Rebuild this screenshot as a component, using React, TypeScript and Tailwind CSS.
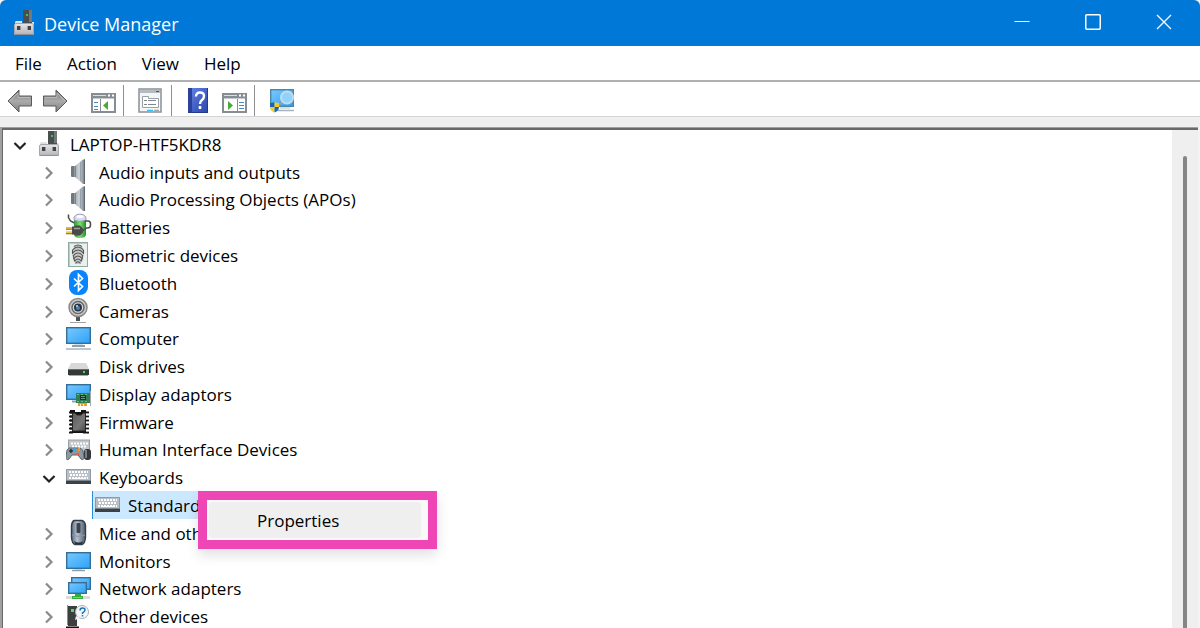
import type { ReactNode } from "react";

function Glyph({ children }: { children: ReactNode }) {
  return (
    <svg className="block h-7 w-[26px] shrink-0" viewBox="0 0 26 28" aria-hidden="true">
      {children}
    </svg>
  );
}

function Gradients() {
  return (
    <svg className="absolute h-0 w-0" aria-hidden="true">
      <defs>
        <linearGradient id="screen" x1="0" y1="0" x2="1" y2="1">
          <stop offset="0" stopColor="#7cc8fb" />
          <stop offset="0.5" stopColor="#52b5fb" />
          <stop offset="1" stopColor="#2ba3f8" />
        </linearGradient>
        <linearGradient id="metal" x1="0" y1="0" x2="0" y2="1">
          <stop offset="0" stopColor="#e6e6e8" />
          <stop offset="1" stopColor="#b4b5b9" />
        </linearGradient>
        <linearGradient id="cone" x1="0" y1="0" x2="1" y2="0">
          <stop offset="0" stopColor="#a4abb2" />
          <stop offset="0.4" stopColor="#cdd2d7" />
          <stop offset="0.75" stopColor="#98a1aa" />
          <stop offset="1" stopColor="#6a747e" />
        </linearGradient>
        <linearGradient id="arrow" x1="0" y1="0" x2="0" y2="1">
          <stop offset="0" stopColor="#777" />
          <stop offset="0.5" stopColor="#ababab" />
          <stop offset="1" stopColor="#7e7e7e" />
        </linearGradient>
        <linearGradient id="mouse" x1="0" y1="0" x2="1" y2="0">
          <stop offset="0" stopColor="#596b80" />
          <stop offset="0.4" stopColor="#b4c2d2" />
          <stop offset="1" stopColor="#4c5a6b" />
        </linearGradient>
        <linearGradient id="chip" x1="0" y1="0" x2="1" y2="1">
          <stop offset="0" stopColor="#5b5b5b" />
          <stop offset="0.6" stopColor="#777" />
          <stop offset="1" stopColor="#4a4a4a" />
        </linearGradient>
        <linearGradient id="book" x1="0" y1="0" x2="1" y2="1">
          <stop offset="0" stopColor="#6688e2" />
          <stop offset="0.5" stopColor="#4563c8" />
          <stop offset="1" stopColor="#2c48ac" />
        </linearGradient>
        <linearGradient id="battery" x1="0" y1="0" x2="1" y2="0">
          <stop offset="0" stopColor="#249a2b" />
          <stop offset="0.5" stopColor="#7be070" />
          <stop offset="1" stopColor="#1c8e24" />
        </linearGradient>
      </defs>
    </svg>
  );
}

function DeviceIcon() {
  return (
    <Glyph>
      <rect x="11" y="1" width="9" height="13" fill="#4b4e51" />
      <rect x="17" y="1" width="3" height="12" fill="#75787b" />
      <rect x="14" y="5" width="2" height="2" fill="#35c94c" />
      <path d="M4 12h6v2h10v-1h2v11H3V13z" fill="url(#metal)" />
      <path d="M2.500 15.500v10h19v-10l-1.500-1H4z" fill="url(#metal)" stroke="#a6a7ab" strokeWidth="1" />
      <path d="M3 25.500h18" stroke="#8f9094" />
      <rect x="5" y="17" width="4" height="4" fill="#444" />
      <rect x="15" y="17" width="4" height="4" fill="#444" />
      <path d="M8.500 17v4M15.500 17v4" stroke="#999" />
    </Glyph>
  );
}

function SpeakerIcon() {
  return (
    <Glyph>
      <rect x="5" y="8" width="6" height="11" rx="1" fill="#6f7880" />
      <path d="M8 8h3v11H8z" fill="#9199a1" />
      <path d="M9 8L17 1.500h2V26h-2L9 19z" fill="url(#cone)" />
      <path d="M18.500 1.500V26" stroke="#5d6771" />
      <path d="M9.500 8v11" stroke="#7b848d" />
      <path d="M14.500 4v19" stroke="#87909a" opacity=".6" />
    </Glyph>
  );
}

function BatteryIcon() {
  return (
    <Glyph>
      <path d="M2.500 1.500v3l2 3.500 4 2" fill="none" stroke="#4c4c4c" strokeWidth="1.500" />
      <path d="M8 5v16q0 4 6 4t6-4V5z" fill="url(#battery)" />
      <path d="M8 7V4q2-3 6-3t6 3v3q-6 3-12 0z" fill="#d9dcef" stroke="#8d91a9" strokeWidth=".8" />
      <ellipse cx="14" cy="3.500" rx="3.500" ry="1.500" fill="#fff" />
      <path d="M19 8h3q2.500 0 2.500 3v1q0 3-3 3h-1l-4 3" fill="none" stroke="#4b4b4b" strokeWidth="1.500" />
      <path d="M0 15.500h7M0 20h7" stroke="#8d6518" strokeWidth="2.500" />
      <path d="M0 15h7M0 19.500h7" stroke="#f0c652" strokeWidth="1.500" />
      <path d="M6 13.500h2l2-1h4l3 3v4l-3 3h-4l-2-1H6z" fill="#4a4a4a" />
      <path d="M8 15.500h6" stroke="#a0a0a0" strokeWidth="1.500" />
    </Glyph>
  );
}

function FingerprintIcon() {
  return (
    <Glyph>
      <rect x="2.500" y="1.500" width="19" height="24" fill="#eaf0ed" stroke="#8eaca3" />
      <path d="M3.500 25V2.500H21" fill="none" stroke="#b6cec6" />
      <path d="M7 7q5-6 10 0l1 5-1 6-2 4q-3 2-6 0l-2-4-1-6z" fill="#c4c6c5" />
      <g fill="none" stroke="#555" strokeWidth="1.100">
        <path d="M8 5.500q4-3 8 0M6.500 9q5.500-6 11 0M6.500 12q5.500-6 11 0M7 15q5-6 10 0M7.500 18q4.500-6 9 0M8.500 20.500q3.500-5 7 0M9.500 22.500q2.500-3.500 5 0" />
        <path d="M6.500 9v4M17.500 9v4M7.500 15l1 5M16.500 15l-1 5" />
      </g>
    </Glyph>
  );
}

function BluetoothIcon() {
  return (
    <Glyph>
      <rect x="3" y="1" width="19" height="25" rx="8" fill="#0a84fb" />
      <path d="M8 9.500l8.500 8L12.500 21.500V5.500L16.500 9.500l-8.500 8" fill="none" stroke="#fff" strokeWidth="1.700" />
    </Glyph>
  );
}

function CameraIcon() {
  return (
    <Glyph>
      <path d="M10 19h4v5h-4z" fill="#505050" />
      <path d="M4 25.500h16" stroke="#a2a2a2" />
      <circle cx="12" cy="10.500" r="9" fill="#c9cbcb" stroke="#8a8a8a" strokeWidth="1.500" />
      <circle cx="12" cy="10.500" r="6" fill="#d9dada" stroke="#666" strokeWidth="1.500" />
      <circle cx="12" cy="10.500" r="4" fill="#2b3442" />
      <circle cx="12" cy="11" r="2" fill="#4a82bc" />
      <path d="M10 8h2v2h-2z" fill="#a5b6c4" />
    </Glyph>
  );
}

function ComputerIcon() {
  return (
    <Glyph>
      <rect x=".7" y="3.700" width="23.600" height="15.600" fill="url(#screen)" stroke="#356f99" strokeWidth="1.400" />
      <path d="M8 20h9v1H8z" fill="#d5dce2" />
      <path d="M6 21h13v2H6z" fill="#8ca0b0" />
      <path d="M0 25h25" stroke="#a5b3be" strokeWidth="1.500" />
    </Glyph>
  );
}

function DiskIcon() {
  return (
    <Glyph>
      <path d="M5 11h15l3 6H2z" fill="#d7d8d9" />
      <path d="M2 17h21v6H2z" fill="#343838" />
      <path d="M2 17.500h21" stroke="#696d6d" />
      <path d="M17 19h2v2h-2z" fill="#39ed43" />
      <path d="M3 23.500h19" stroke="#a8a8a8" />
    </Glyph>
  );
}

function DisplayIcon() {
  return (
    <Glyph>
      <rect x=".7" y="4.700" width="23.600" height="14.600" fill="url(#screen)" stroke="#356f99" strokeWidth="1.400" />
      <path d="M6 21.500h6" stroke="#8ca0b0" strokeWidth="2" />
      <rect x="10" y="13" width="14" height="10" fill="#2f7f55" />
      <path d="M11 14.500h12M11 21.500h12" stroke="#71b98a" strokeDasharray="2 2" />
      <rect x="14" y="15" width="6" height="5" fill="#17352a" />
      <path d="M15 16.500h4M15 18.500h4" stroke="#70937d" />
      <path d="M12 23h9v3h-9z" fill="#ed9d26" />
      <path d="M14.500 24v2M17.500 24v2" stroke="#fff0b0" />
      <path d="M24.500 11v15" stroke="#a5a7a7" />
    </Glyph>
  );
}

function FirmwareIcon() {
  return (
    <Glyph>
      <path d="M4 2h5v2h6V2h5v23H4z" fill="#111" />
      <path d="M3 4.500h4M3 8.500h4M3 12.500h4M3 16.500h4M3 20.500h4M3 24.500h4M17 4.500h6M17 8.500h6M17 12.500h6M17 16.500h6M17 20.500h6M17 24.500h6" stroke="#171717" strokeWidth="2" />
      <path d="M3 6.500h3M3 10.500h3M3 14.500h3M3 18.500h3M3 22.500h3M20 6.500h3M20 10.500h3M20 14.500h3M20 18.500h3M20 22.500h3" stroke="#fff" strokeWidth="1.500" />
      <path d="M6.500 5H9l2 2h4l2-2h2.500v18h-13z" fill="url(#chip)" stroke="#262626" />
    </Glyph>
  );
}

function HidIcon() {
  return (
    <Glyph>
      <rect x="2.500" y="5" width="21" height="13" fill="#c1c7cb" stroke="#98a1a8" />
      <path d="M5 8.500h17M6 11.500h15" stroke="#fff" strokeWidth="2" strokeDasharray="2 1" />
      <path d="M1 15q2-3 5-2h6q4 0 5 3l1 7q-1 3-3 1l-3-4H6l-3 4q-3 2-3-2z" fill="#8f989f" stroke="#5c666e" />
      <path d="M3 16h4M5 14v4" stroke="#28323c" strokeWidth="1.500" />
      <path d="M7 13h3v3H7z" fill="#36a6ea" />
      <path d="M12 13h2v3h-2z" fill="#ed993a" />
      <path d="M10 18h3v2h-3z" fill="#df6546" />
      <rect x="18" y="14" width="7" height="11" rx="3" fill="#35383d" />
      <path d="M20 15v8" stroke="#8f969e" strokeWidth="1.500" />
    </Glyph>
  );
}

function KeyboardIcon() {
  return (
    <Glyph>
      <path d="M0 6h25v15H0z" fill="#a1aab3" />
      <path d="M.5 17V6.500h24V17" fill="#b8bfc6" stroke="#909aa4" />
      <path d="M3 9h19M4 12h17M3 15h19" stroke="#fff" strokeWidth="2" strokeDasharray="2 1" />
      <path d="M8 15.500h10" stroke="#fff" />
      <path d="M0 18h25v3H0z" fill="#3b4146" />
      <path d="M0 17.500h25" stroke="#7b858e" />
    </Glyph>
  );
}

function MouseIcon() {
  return (
    <Glyph>
      <path d="M8 1.500h8q3 1 3.500 5v12q-.5 6-3.500 7H9q-3-1-3.500-7v-12q.5-4 2.500-5z" fill="url(#mouse)" stroke="#343c45" strokeWidth="1.400" />
      <path d="M6 16q6 3 13 0" fill="none" stroke="#8997a6" />
      <path d="M8 22q5 3 9 0l-1 3H9z" fill="#2b3138" />
      <rect x="10.500" y="4" width="4" height="10" rx="1" fill="#3e4249" />
    </Glyph>
  );
}

function MonitorIcon() {
  return (
    <Glyph>
      <rect x=".7" y="5.700" width="23.600" height="15.600" fill="url(#screen)" stroke="#356f99" strokeWidth="1.400" />
      <path d="M9 22h7v1H9z" fill="#d5dce2" />
      <path d="M6 23.500h13" stroke="#8ca0b0" strokeWidth="1.500" />
    </Glyph>
  );
}

function NetworkIcon() {
  return (
    <Glyph>
      <rect x="5.700" y="3.700" width="18.600" height="11.600" fill="url(#screen)" stroke="#356f99" strokeWidth="1.400" />
      <rect x="2.700" y="8.700" width="17.600" height="10.600" fill="url(#screen)" stroke="#356f99" strokeWidth="1.400" />
      <path d="M0 22h24v3H0z" fill="#d9dbdc" />
      <path d="M9 20h6v2h2v3H6v-3h3z" fill="#35ad3e" />
      <path d="M7 23.500h9" stroke="#6bdc6d" />
    </Glyph>
  );
}

function OtherIcon() {
  return (
    <Glyph>
      <path d="M2 4h9v20H2z" fill="#3c3e40" />
      <path d="M1.500 3v20" stroke="#898d90" />
      <path d="M0 24.500h13v3H0z" fill="#111" />
      <rect x="5" y="7" width="3" height="3" fill="#35ef43" />
      <circle cx="16" cy="10" r="6.500" fill="#f4f7fa" stroke="#a7b0b8" />
      <path d="M10 14l-1 4 5-2z" fill="#f4f7fa" />
      <path d="M14 8.500q0-2.500 2.500-2.500t2.500 2q0 1.500-2.500 3v1M16.500 13v1.500" fill="none" stroke="#1a72b5" strokeWidth="1.500" />
    </Glyph>
  );
}

function BackIcon() {
  return (
    <svg className="block h-7 w-[26px]" viewBox="0 0 26 28" aria-hidden="true">
      <path d="M1 14L12 3v6h12.500v10H12v6z" fill="url(#arrow)" stroke="#5a5a5a" strokeLinejoin="round" />
      <path d="M3 14l8-8v4.500h12" fill="none" stroke="#b9b9b9" />
    </svg>
  );
}

function ForwardIcon() {
  return (
    <svg className="block h-7 w-[26px]" viewBox="0 0 26 28" aria-hidden="true">
      <path d="M25 14L14 3v6H1.500v10H14v6z" fill="url(#arrow)" stroke="#5a5a5a" strokeLinejoin="round" />
      <path d="M3 10.500h12V6l8 8" fill="none" stroke="#b9b9b9" />
    </svg>
  );
}

function ConsoleIcon({ flipped = false }: { flipped?: boolean }) {
  return (
    <svg className="block h-7 w-[26px]" viewBox="0 0 26 28" aria-hidden="true">
      <rect x="1" y="7" width="23" height="18" fill="#fff" stroke="#868d95" strokeWidth="2" />
      <path d="M1 7h23v4H1z" fill="#868d95" />
      <path d="M2 8.500h13" stroke="#d9dde1" />
      <path d="M17 7.500h2v2h-2zM21 7.500h2v2h-2z" fill="#fff" />
      <path d="M2 11.500h21" stroke="#c5cbd1" />
      {flipped ? (
        <>
          <path d="M15.500 12v13" stroke="#868d95" />
          <path d="M17 15.500h5M17 18.500h5M17 21.500h5" stroke="#4e86bd" />
          <path d="M6 14l5 4.500L6 23z" fill="#45ad35" />
        </>
      ) : (
        <>
          <path d="M9.500 12v13" stroke="#868d95" />
          <path d="M3 15.500h4M3 19.500h4M3 22.500h4" stroke="#4e86bd" />
          <path d="M17 14l-5 4.500 5 4.500z" fill="#45ad35" />
        </>
      )}
    </svg>
  );
}

function PropertiesIcon() {
  return (
    <svg className="block h-7 w-[26px]" viewBox="0 0 26 28" aria-hidden="true">
      <rect x="1" y="2" width="22" height="23" fill="#f5f6f7" stroke="#8a9097" strokeWidth="1.500" />
      <path d="M2 3h20v3H2z" fill="#b6bbc0" />
      <path d="M18 4.500h3" stroke="#555" />
      <path d="M4.500 9.500h6v2h10v9h-16z" fill="#fff" stroke="#9aa1a8" />
      <path d="M6 13.500h3M10 13.500h8M6 17.500h3M10 17.500h8" stroke="#7e868e" />
      <path d="M9 23.500h6" stroke="#27c5f4" strokeWidth="1.500" />
      <path d="M16 23.500h5" stroke="#9ea5ab" strokeWidth="1.500" />
    </svg>
  );
}

function HelpIcon() {
  return (
    <svg className="block h-7 w-[26px]" viewBox="0 0 26 28" aria-hidden="true">
      <path d="M3 1h20v25H3z" fill="url(#book)" />
      <path d="M3 1h4v25H3z" fill="#2b429c" />
      <path d="M3 25.500h20M22.500 1v25" stroke="#27398b" />
      <path d="M11 9.500q0-4 4-4t4 3.500q0 2.500-2 4t-2 4" fill="none" stroke="#fff" strokeWidth="2.400" />
      <path d="M13.700 19h2.600v3h-2.600z" fill="#fff" />
    </svg>
  );
}

function ScanIcon() {
  return (
    <svg className="block h-7 w-[26px]" viewBox="0 0 26 28" aria-hidden="true">
      <rect x="1.700" y="2.700" width="22.600" height="16.600" fill="url(#screen)" stroke="#4e86aa" strokeWidth="1.400" />
      <path d="M11 20h10v2H11z" fill="#d9dee2" />
      <path d="M9 23.500h16" stroke="#a5b3be" strokeWidth="1.500" />
      <path d="M8 19l6-5" stroke="#8fa0ac" strokeWidth="2.500" />
      <circle cx="18" cy="10.500" r="6" fill="#8dd3fb" stroke="#c4dbe8" strokeWidth="2" />
      <path d="M1 16q3 0 4.500-1.500V20H1z" fill="#1565bd" />
      <path d="M5.500 14.500Q7 16 10 16v4H5.500z" fill="#f8ca24" />
      <path d="M1 20h4.500v5.500Q1 24 1 20z" fill="#f8ca24" />
      <path d="M10 20H5.500v5.500Q10 24 10 20z" fill="#1565bd" />
    </svg>
  );
}

type Device = { label: string; icon: () => ReactNode; level: 1 | 2 | 3; open?: boolean; selected?: boolean };

const devices: Device[] = [
  { label: "LAPTOP-HTF5KDR8", icon: DeviceIcon, level: 1, open: true },
  { label: "Audio inputs and outputs", icon: SpeakerIcon, level: 2 },
  { label: "Audio Processing Objects (APOs)", icon: SpeakerIcon, level: 2 },
  { label: "Batteries", icon: BatteryIcon, level: 2 },
  { label: "Biometric devices", icon: FingerprintIcon, level: 2 },
  { label: "Bluetooth", icon: BluetoothIcon, level: 2 },
  { label: "Cameras", icon: CameraIcon, level: 2 },
  { label: "Computer", icon: ComputerIcon, level: 2 },
  { label: "Disk drives", icon: DiskIcon, level: 2 },
  { label: "Display adaptors", icon: DisplayIcon, level: 2 },
  { label: "Firmware", icon: FirmwareIcon, level: 2 },
  { label: "Human Interface Devices", icon: HidIcon, level: 2 },
  { label: "Keyboards", icon: KeyboardIcon, level: 2, open: true },
  { label: "Standard", icon: KeyboardIcon, level: 3, selected: true },
  { label: "Mice and oth", icon: MouseIcon, level: 2 },
  { label: "Monitors", icon: MonitorIcon, level: 2 },
  { label: "Network adapters", icon: NetworkIcon, level: 2 },
  { label: "Other devices", icon: OtherIcon, level: 2 },
];

const indents = { 1: "pl-0", 2: "pl-[29px]", 3: "pl-[58px]" };

function Row({ device }: { device: Device }) {
  const { label, icon: Icon, level, open, selected } = device;
  return (
    <li
      role="treeitem"
      aria-level={level}
      aria-selected={selected ?? false}
      aria-expanded={level === 3 ? undefined : (open ?? false)}
      className={`relative flex min-h-0 ${indents[level]}`}
    >
      {level === 3 ? (
        <span className="w-[31px] shrink-0" />
      ) : (
        <button
          type="button"
          aria-label={open ? `Collapse ${label}` : `Expand ${label}`}
          className="flex w-[31px] shrink-0 items-center justify-center pt-[2px] pl-[3px]"
        >
          <svg className="h-4 w-4" viewBox="0 0 16 16" fill="none" aria-hidden="true">
            {open ? (
              <path d="M2.500 6L8 11.500 13.500 6" stroke="#222" strokeWidth="2.200" />
            ) : (
              <path d="M5 2.500L10.500 8 5 13.500" stroke="#8b8b8b" strokeWidth="2.200" />
            )}
          </svg>
        </button>
      )}
      <span
        className={`flex items-center gap-[7px] pr-1 ${
          selected ? "border-l border-[#2a8ad4] bg-[#cce8ff] pl-[2px]" : "pl-[3px]"
        }`}
      >
        <Icon />
        <span className="pt-[2px] whitespace-nowrap">{label}</span>
      </span>
      {selected && (
        <div
          role="menu"
          className="absolute top-0 left-[195px] z-10 h-[58px] w-[239px] border-9 border-[#ee46b4] bg-[#f9f9f9] p-[2px] pr-[7px] shadow-[0_6px_12px_rgba(0,0,0,0.12)]"
        >
          <button type="button" role="menuitem" className="block h-full w-full rounded bg-[#efefef] pt-[2px] pl-12 text-left">
            Properties
          </button>
        </div>
      )}
    </li>
  );
}

function Divider() {
  return <span className="h-[31px] w-px bg-[#8f8f8f]" />;
}

export default function App() {
  return (
    <div className="flex h-screen flex-col overflow-hidden bg-[#f3f3f3] font-['Open_Sans','Noto_Sans',sans-serif] text-[17px] leading-6 text-black">
      <Gradients />
      <header className="flex h-[46px] shrink-0 items-center rounded-t-md bg-[#0078d7] pl-3 text-white">
        <DeviceIcon />
        <h1 className="flex-1 pt-[2px] pl-[6px] text-lg leading-6">Device Manager</h1>
        <div className="mr-px flex pb-[2px]">
          <button type="button" aria-label="Minimise" className="flex w-[71px] justify-center">
            <svg className="h-4 w-4" viewBox="0 0 16 16" fill="none" stroke="#fff" aria-hidden="true">
              <path d="M.5 7.500h15" />
            </svg>
          </button>
          <button type="button" aria-label="Maximise" className="flex w-[71px] justify-center">
            <svg className="h-4 w-4" viewBox="0 0 16 16" fill="none" stroke="#fff" strokeWidth="1.500" aria-hidden="true">
              <rect x=".75" y=".75" width="14.500" height="14.500" rx="1" />
            </svg>
          </button>
          <button type="button" aria-label="Close" className="flex w-[71px] justify-center">
            <svg className="h-4 w-4" viewBox="0 0 16 16" fill="none" stroke="#fff" strokeWidth="1.300" aria-hidden="true">
              <path d="M1 1l14 14M15 1L1 15" />
            </svg>
          </button>
        </div>
      </header>

      <nav className="flex h-9 shrink-0 items-center gap-[25px] border-b-2 border-[#b0b0b0] bg-white px-[15px] pt-[2px]">
        <button type="button">File</button>
        <button type="button">Action</button>
        <button type="button">View</button>
        <button type="button">Help</button>
      </nav>

      <div role="toolbar" className="flex h-[35px] shrink-0 items-center border-b border-[#d4d4d4] bg-white pt-[3px] pl-[7px]">
        <button type="button" aria-label="Back"><BackIcon /></button>
        <button type="button" aria-label="Forward" className="ml-[9px]"><ForwardIcon /></button>
        <button type="button" aria-label="Show console tree" className="mr-[6px] ml-[23px]"><ConsoleIcon /></button>
        <Divider />
        <button type="button" aria-label="Properties" className="mr-[7px] ml-[14px]"><PropertiesIcon /></button>
        <Divider />
        <button type="button" aria-label="Help" className="ml-[13px]"><HelpIcon /></button>
        <button type="button" aria-label="Show action pane" className="mr-[6px] ml-[11px]"><ConsoleIcon flipped /></button>
        <Divider />
        <button type="button" aria-label="Scan for hardware changes" className="ml-[14px]"><ScanIcon /></button>
      </div>

      <div className="h-[10px] shrink-0 bg-[#efefef]" />

      <main className="mr-[2px] flex min-h-0 flex-1 border-t border-l-2 border-[#a0a0a0]">
        <div className="flex min-w-0 flex-1 border-t-2 border-l border-[#696969] bg-white">
          <ul role="tree" aria-label="Devices" className="grid h-[500px] min-w-0 flex-1 auto-rows-fr">
            {devices.map((device) => (
              <Row key={device.label} device={device} />
            ))}
          </ul>
          <div className="flex w-[26px] justify-center bg-[#efefef] pt-[26px]">
            <div className="h-[500px] w-1 rounded-t-full bg-[#858585]" />
          </div>
        </div>
      </main>
    </div>
  );
}
